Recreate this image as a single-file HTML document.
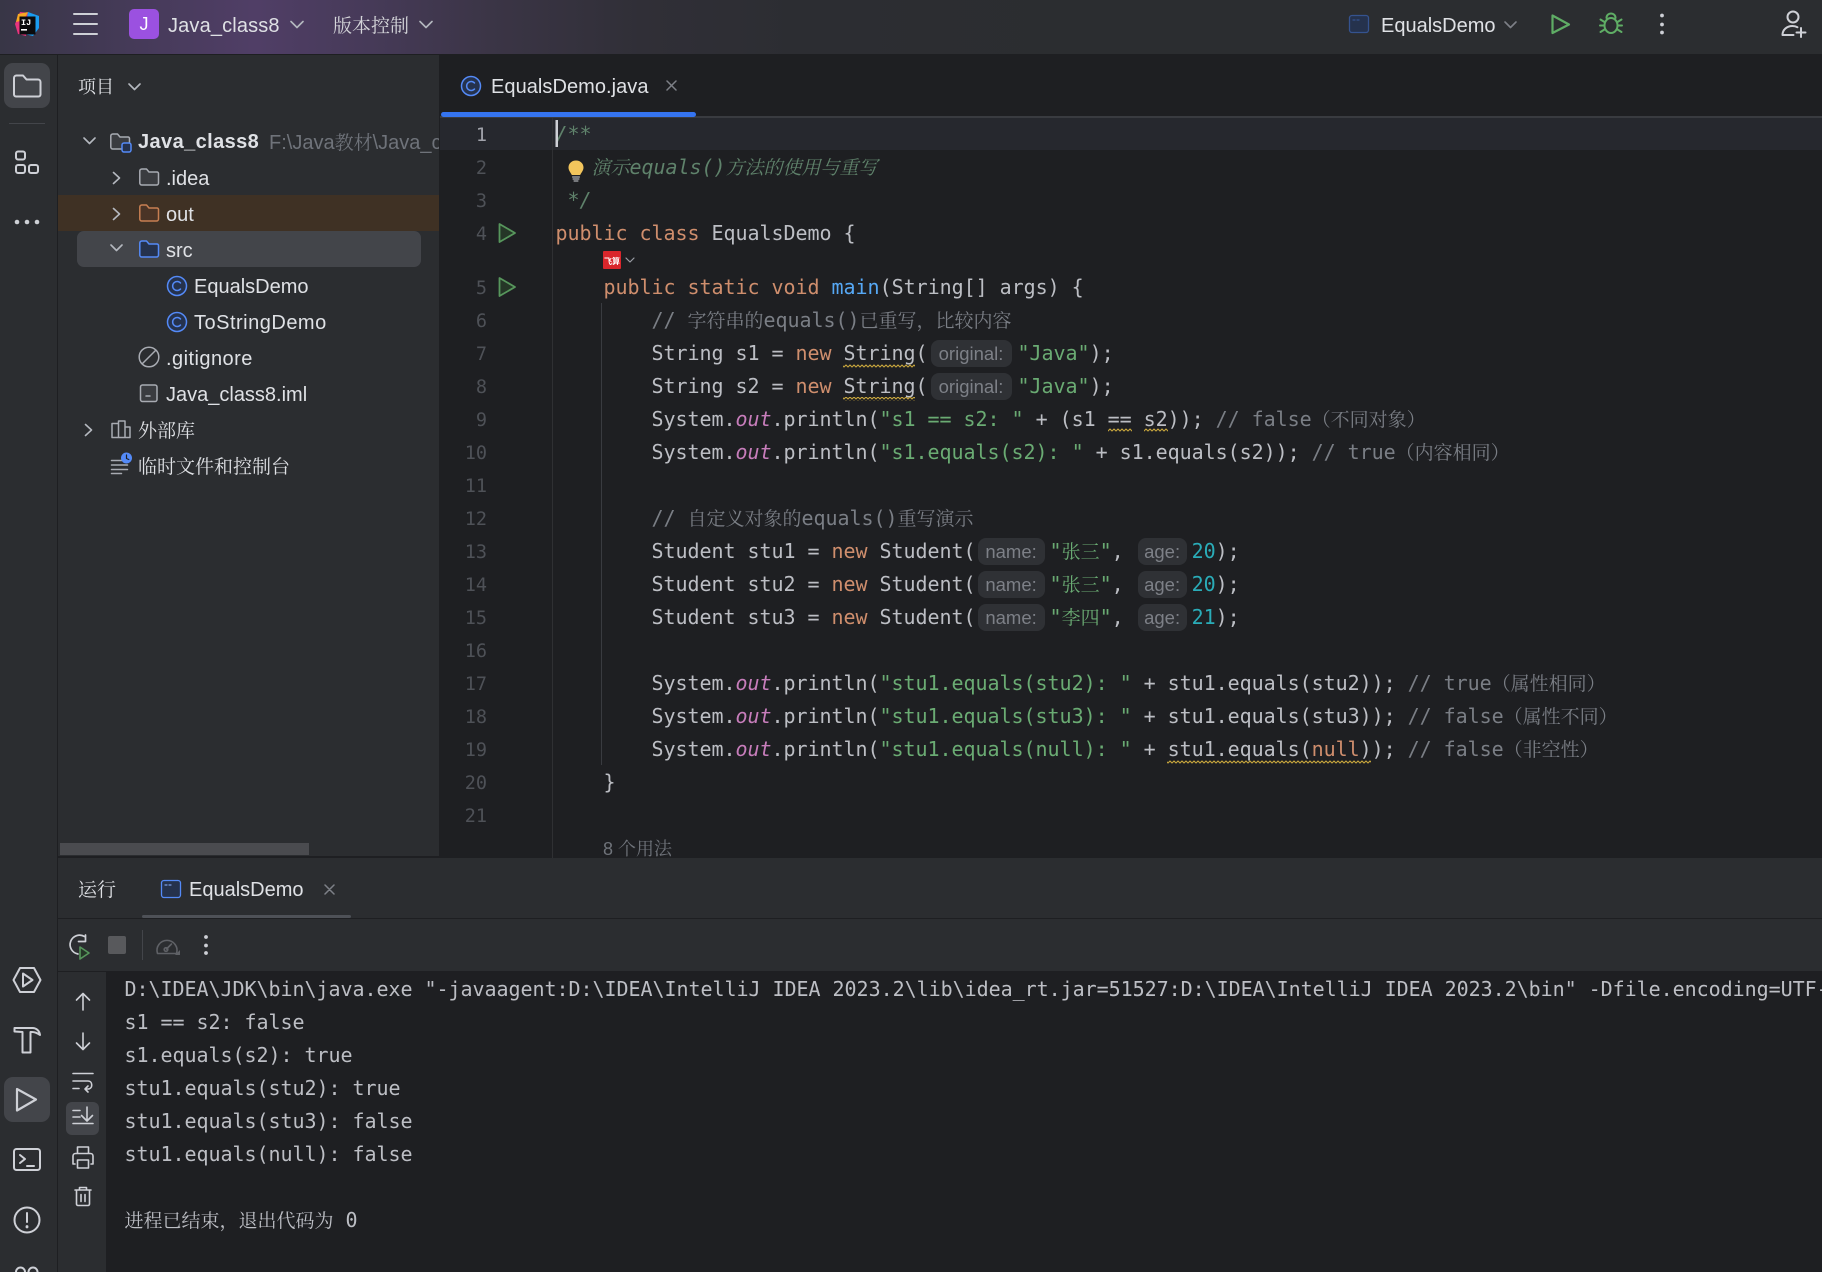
<!DOCTYPE html>
<html lang="zh"><head><meta charset="utf-8"><title>EqualsDemo.java</title>
<style>
html,body{margin:0;padding:0;background:#1e1f22}
#r{position:relative;width:1822px;height:1272px;overflow:hidden;background:#1e1f22;font-family:"Liberation Sans","Noto Serif CJK SC",sans-serif;color:#dfe1e5}
#r>div{position:absolute}
.u{font-size:20px;line-height:36px;height:36px;white-space:pre}
.z{font-family:"Noto Serif CJK SC","Liberation Serif",serif;letter-spacing:0;font-style:normal}
.cd{font-family:"DejaVu Sans Mono","Liberation Mono",monospace;font-size:20px;letter-spacing:-.04px;line-height:33px;height:33px;white-space:pre;color:#bcbec4}
.cd .z{font-size:19px}
.k{color:#cf8e6d}.s{color:#6aab73}.c{color:#7a7e85}.d{color:#5f826b;font-style:italic}.m{color:#56a8f5}.n{color:#2aacb8}.o{color:#c77dbb;font-style:italic}
.h{display:inline-block;height:27px;line-height:27px;background:#2f3135;border-radius:8px;color:#7d8087;font:18.5px/27px "Liberation Sans",sans-serif;letter-spacing:0;text-align:center}
.ln{font-family:"DejaVu Sans Mono",monospace;font-size:18.5px;line-height:33px;height:33px;left:440px;width:47px;text-align:right;color:#4e5157}
</style></head><body>
<div id="r">
<div style="left:0;top:0;width:1822px;height:54px;background:linear-gradient(90deg,#383646 0,#453a58 130px,#503e66 255px,#463a58 370px,#3b3546 490px,#302f37 640px,#2c2d32 800px,#2b2d30 1100px)"></div>
<div style="left:0;top:54px;width:1822px;height:1px;background:#1e1f22"></div>
<div style="left:0;top:55px;width:57px;height:1217px;background:#2b2d30"></div>
<div style="left:57px;top:55px;width:1px;height:1217px;background:#1e1f22"></div>
<div style="left:58px;top:55px;width:381px;height:801px;background:#2b2d30"></div>
<div style="left:58px;top:195px;width:381px;height:36px;background:#3f3124"></div>
<div style="left:77px;top:231px;width:344px;height:36px;border-radius:7px;background:#43454a"></div>
<div style="left:60px;top:843px;width:249px;height:12px;background:#4a4b4f"></div>
<div style="left:440px;top:116px;width:1382px;height:2px;background:#393b40"></div>
<div style="left:441px;top:112px;width:255px;height:5px;border-radius:3px;background:#3574f0"></div>
<div style="left:440px;top:118px;width:1382px;height:32px;background:#26282e"></div>
<div style="left:552px;top:118px;width:1px;height:740px;background:#2f3033"></div>
<div style="left:601px;top:303px;width:1px;height:462px;background:#393b40"></div>
<div style="left:58px;top:858px;width:1764px;height:113px;background:#2b2d30"></div>
<div style="left:58px;top:918px;width:1764px;height:1px;background:#1e1f22"></div>
<div style="left:142px;top:915px;width:209px;height:3px;border-radius:2px;background:#4e5157"></div>
<div style="left:58px;top:971px;width:1764px;height:1px;background:#1e1f22"></div>
<div style="left:58px;top:972px;width:48px;height:300px;background:#2b2d30"></div>
<div style="left:4px;top:63px;width:46px;height:45px;border-radius:9px;background:#43454a"></div>
<div style="left:4px;top:1077px;width:46px;height:45px;border-radius:9px;background:#43454a"></div>
<div style="left:66px;top:1102px;width:33px;height:33px;border-radius:6px;background:#43454a"></div>
<div style="left:9px;top:123px;width:36px;height:1px;background:#43454a"></div>
<div style="left:142px;top:930px;width:1px;height:30px;background:#43454a"></div>

<!-- top bar text -->
<div style="left:129px;top:9px;width:30px;height:30px;border-radius:5px;background:#9b51e0;color:#fff;font-size:18px;line-height:30px;text-align:center">J</div>
<div class="u" style="left:168px;top:8px;letter-spacing:.15px">Java_class8</div>
<div class="u" style="left:333px;top:7px;font-size:19px;color:#d5d6da"><span class="z">版本控制</span></div>
<div class="u" style="left:1381px;top:8px">EqualsDemo</div>

<!-- tree -->
<div class="u" style="left:78px;top:68px;font-size:18px"><span class="z">项目</span></div>
<div class="u" style="left:138px;top:124px;font-weight:bold;letter-spacing:.4px">Java_class8</div>
<div class="u" style="left:269px;top:124px;width:170px;overflow:hidden;color:#6f737a">F:\Java<span class="z" style="font-size:19px">教材</span>\Java_class8</div>
<div class="u" style="left:166px;top:161px">.idea</div>
<div class="u" style="left:166px;top:197px">out</div>
<div class="u" style="left:166px;top:233px">src</div>
<div class="u" style="left:194px;top:269px">EqualsDemo</div>
<div class="u" style="left:194px;top:305px;letter-spacing:.5px">ToStringDemo</div>
<div class="u" style="left:166px;top:341px;letter-spacing:.45px">.gitignore</div>
<div class="u" style="left:166px;top:377px">Java_class8.iml</div>
<div class="u" style="left:138px;top:412px;font-size:19px"><span class="z">外部库</span></div>
<div class="u" style="left:138px;top:448px;font-size:19px"><span class="z">临时文件和控制台</span></div>

<!-- editor tab -->
<div class="u" style="left:491px;top:69px;letter-spacing:.05px">EqualsDemo.java</div>

<!-- line numbers -->
<div class="ln" style="top:119px;color:#a1a3ab">1</div>
<div class="ln" style="top:152px">2</div>
<div class="ln" style="top:185px">3</div>
<div class="ln" style="top:218px">4</div>
<div class="ln" style="top:272px">5</div>
<div class="ln" style="top:305px">6</div>
<div class="ln" style="top:338px">7</div>
<div class="ln" style="top:371px">8</div>
<div class="ln" style="top:404px">9</div>
<div class="ln" style="top:437px">10</div>
<div class="ln" style="top:470px">11</div>
<div class="ln" style="top:503px">12</div>
<div class="ln" style="top:536px">13</div>
<div class="ln" style="top:569px">14</div>
<div class="ln" style="top:602px">15</div>
<div class="ln" style="top:635px">16</div>
<div class="ln" style="top:668px">17</div>
<div class="ln" style="top:701px">18</div>
<div class="ln" style="top:734px">19</div>
<div class="ln" style="top:767px">20</div>
<div class="ln" style="top:800px">21</div>

<!-- code -->
<div class="cd" style="left:555.5px;top:118px"><span class="d">/**</span></div>
<div class="cd" style="left:591.5px;top:150px"><span class="d"><span class="z" style="font-style:italic">演示</span>equals()<span class="z" style="font-style:italic">方法的使用与重写</span></span></div>
<div class="cd" style="left:567.5px;top:184px"><span class="d">*/</span></div>
<div class="cd" style="left:555.5px;top:217px"><span class="k">public class</span> EqualsDemo {</div>
<div class="cd" style="left:603.5px;top:271px"><span class="k">public static void</span> <span class="m">main</span>(String[] args) {</div>
<div class="cd" style="left:651.5px;top:303px"><span class="c">// <span class="z">字符串的</span>equals()<span class="z">已重写，比较内容</span></span></div>
<div class="cd" style="left:651.5px;top:337px">String s1 = <span class="k">new</span> String(<span class="h" style="width:81px;margin:0 6px 0 3px">original:</span><span class="s">"Java"</span>);</div>
<div class="cd" style="left:651.5px;top:370px">String s2 = <span class="k">new</span> String(<span class="h" style="width:81px;margin:0 6px 0 3px">original:</span><span class="s">"Java"</span>);</div>
<div class="cd" style="left:651.5px;top:402px">System.<span class="o">out</span>.println(<span class="s">"s1 == s2: "</span> + (s1 == s2)); <span class="c">// false<span class="z">（不同对象）</span></span></div>
<div class="cd" style="left:651.5px;top:435px">System.<span class="o">out</span>.println(<span class="s">"s1.equals(s2): "</span> + s1.equals(s2)); <span class="c">// true<span class="z">（内容相同）</span></span></div>
<div class="cd" style="left:651.5px;top:501px"><span class="c">// <span class="z">自定义对象的</span>equals()<span class="z">重写演示</span></span></div>
<div class="cd" style="left:651.5px;top:534px">Student stu1 = <span class="k">new</span> Student(<span class="h" style="width:67px;margin:0 5px 0 2px">name:</span><span class="s">"<span class="z">张三</span>"</span>,<span class="h" style="width:49px;margin:0 5px 0 14px">age:</span><span class="n">20</span>);</div>
<div class="cd" style="left:651.5px;top:567px">Student stu2 = <span class="k">new</span> Student(<span class="h" style="width:67px;margin:0 5px 0 2px">name:</span><span class="s">"<span class="z">张三</span>"</span>,<span class="h" style="width:49px;margin:0 5px 0 14px">age:</span><span class="n">20</span>);</div>
<div class="cd" style="left:651.5px;top:600px">Student stu3 = <span class="k">new</span> Student(<span class="h" style="width:67px;margin:0 5px 0 2px">name:</span><span class="s">"<span class="z">李四</span>"</span>,<span class="h" style="width:49px;margin:0 5px 0 14px">age:</span><span class="n">21</span>);</div>
<div class="cd" style="left:651.5px;top:666px">System.<span class="o">out</span>.println(<span class="s">"stu1.equals(stu2): "</span> + stu1.equals(stu2)); <span class="c">// true<span class="z">（属性相同）</span></span></div>
<div class="cd" style="left:651.5px;top:699px">System.<span class="o">out</span>.println(<span class="s">"stu1.equals(stu3): "</span> + stu1.equals(stu3)); <span class="c">// false<span class="z">（属性不同）</span></span></div>
<div class="cd" style="left:651.5px;top:732px">System.<span class="o">out</span>.println(<span class="s">"stu1.equals(null): "</span> + stu1.equals(<span class="k">null</span>)); <span class="c">// false<span class="z">（非空性）</span></span></div>
<div class="cd" style="left:603.5px;top:766px">}</div>
<div style="left:440px;top:832px;width:1382px;height:26px;overflow:hidden"><div style="position:absolute;left:163px;top:3px;font-size:18px;line-height:26px;color:#6f737a;white-space:pre">8 <span class="z">个用法</span></div></div>

<!-- run panel text -->
<div class="u" style="left:78px;top:871px;font-size:19px"><span class="z">运行</span></div>
<div class="u" style="left:189px;top:872px">EqualsDemo</div>

<!-- console -->
<div style="left:124.5px;top:973px;width:1697px;height:299px;overflow:hidden">
<div class="cd" style="position:absolute;left:0;top:0">D:\IDEA\JDK\bin\java.exe "-javaagent:D:\IDEA\IntelliJ IDEA 2023.2\lib\idea_rt.jar=51527:D:\IDEA\IntelliJ IDEA 2023.2\bin" -Dfile.encoding=UTF-8 -Dsun.stdout.encoding=UTF-8</div>
<div class="cd" style="position:absolute;left:0;top:33px">s1 == s2: false</div>
<div class="cd" style="position:absolute;left:0;top:66px">s1.equals(s2): true</div>
<div class="cd" style="position:absolute;left:0;top:99px">stu1.equals(stu2): true</div>
<div class="cd" style="position:absolute;left:0;top:132px">stu1.equals(stu3): false</div>
<div class="cd" style="position:absolute;left:0;top:165px">stu1.equals(null): false</div>
<div class="cd" style="position:absolute;left:0;top:230px"><span class="z">进程已结束，退出代码为</span> 0</div>
</div>

<!-- icons overlay -->
<svg width="1822" height="1272" viewBox="0 0 1822 1272" style="position:absolute;left:0;top:0" fill="none" stroke-linecap="round" stroke-linejoin="round">
<defs><pattern id="w" width="4" height="4" patternUnits="userSpaceOnUse"><path d="M0 3 L2 1 L4 3" stroke="#c9a73d" stroke-width="1.100" fill="none"/></pattern></defs>
<!-- logo -->
<path d="M15 24 L20 12 L30 13 L26 36 L18 34z" fill="#e8347e" stroke="none"/>
<path d="M18 14 L28 12 L24 20 L16 22z" fill="#f7a823" stroke="none"/>
<path d="M28 12 L39 16 L39 28 L33 36 L24 34z" fill="#1a9cf0" stroke="none"/>
<rect x="19.500" y="16.500" width="16" height="18" fill="#0b0b0d" stroke="none"/>
<text x="21" y="25" font-family="Liberation Mono,monospace" font-weight="bold" font-size="8.500" fill="#fff">IJ</text>
<rect x="21" y="29" width="6" height="1.600" fill="#fff" stroke="none"/>
<!-- hamburger -->
<path d="M74 14H97M74 24H97M74 34H97" stroke="#ced0d6" stroke-width="2"/>
<!-- chevrons -->
<g stroke="#b4b8bf" stroke-width="1.600">
<path d="M291 21.500l6 6 6-6M420 21.500l6 6 6-6"/>
<path d="M129 84l5.500 5.500 5.500-5.500M84 138l5.500 5.500 5.500-5.500M111 245l5.500 5.500 5.500-5.500M113.500 172.500l6 5.500-6 5.500M113.500 208.500l6 5.500-6 5.500M85.500 424.500l6 5.500-6 5.500"/>
<path d="M1505 22l5.500 5.500 5.500-5.500" stroke="#7d8087"/>
</g>
<!-- top right -->
<rect x="1349.500" y="15.500" width="19" height="17" rx="2.500" fill="#25324d" stroke="#35538f" stroke-width="1.300"/>
<path d="M1353 20h2M1357 20h2" stroke="#35538f" stroke-width="1.200"/>
<path d="M1552.500 15.500L1569 24.500 1552.500 33z" stroke="#5fad65" stroke-width="2.200"/>
<g stroke="#5fad65" stroke-width="2">
<ellipse cx="1611" cy="25.500" rx="6.500" ry="7.500"/>
<path d="M1606.500 18c0-6 9-6 9 0M1600.500 19.500l4 2.500M1621.500 19.500l-4 2.500M1600 25.500h4.500M1622 25.500h-4.500M1600.500 32l4-2.500M1621.500 32l-4-2.500"/>
</g>
<g fill="#ced0d6" stroke="none"><circle cx="1662" cy="15.500" r="1.900"/><circle cx="1662" cy="24.500" r="1.900"/><circle cx="1662" cy="32.500" r="1.900"/></g>
<g stroke="#ced0d6" stroke-width="2">
<circle cx="1793" cy="17" r="5.500"/>
<path d="M1782.500 35c0-5 4-9 10-9 2 0 3.500.4 5 1.200M1782.500 35h11M1801 28v9M1796.500 32.500h9"/>
</g>
<!-- left stripe -->
<g stroke="#ced0d6" stroke-width="2">
<path d="M14 78a2.500 2.500 0 0 1 2.500-2.500h6.500l3.500 4h11.500a2.500 2.500 0 0 1 2.500 2.500v12.500a2 2 0 0 1-2 2H16a2 2 0 0 1-2-2z"/>
<rect x="16" y="151.500" width="9" height="8" rx="2"/>
<rect x="16" y="165" width="9" height="8" rx="2"/>
<rect x="29" y="165" width="9" height="8" rx="2"/>
</g>
<g fill="#ced0d6" stroke="none"><circle cx="17" cy="222" r="2.300"/><circle cx="27" cy="222" r="2.300"/><circle cx="37" cy="222" r="2.300"/></g>
<g stroke="#ced0d6" stroke-width="2">
<path d="M20 968h14l6.500 12-6.500 12H20l-6.500-12z"/>
<path d="M23 973.500l9.500 6.500-9.500 6.500z"/>
<path d="M14.500 1028h18c4 0 7 3 7.500 7-2-1.500-4.500-3-8-3h-1.500v20.500h-8v-20.500l-8-.5z"/>
<path d="M17 1089l19 10.500-19 11z" stroke-width="2.200"/>
<rect x="14" y="1149" width="26" height="21" rx="2.500"/>
<path d="M20 1155l5 4-5 4M27 1166h7"/>
<circle cx="27" cy="1220" r="12.500"/>
<path d="M27 1213v9"/>
<path d="M27 1226.500v.5" stroke-width="2.800"/>
<circle cx="20.500" cy="1272" r="4.500"/><circle cx="33" cy="1272" r="4.500"/>
</g>
<!-- folders tree -->
<g transform="translate(110,133)" stroke="#a8abb2" stroke-width="1.500"><path d="M.8 3a2 2 0 0 1 2-2h4.700l2.500 3h8a1.500 1.500 0 0 1 1.500 1.500V16H2.800a2 2 0 0 1-2-2z" fill="#3a3c40"/></g>
<rect x="122" y="143" width="9" height="9" rx="2" fill="#25324d" stroke="#548af7" stroke-width="1.500"/>
<g transform="translate(139,168)" stroke="#a8abb2" stroke-width="1.500"><path d="M.8 3a2 2 0 0 1 2-2h4.700l2.500 3h8a1.500 1.500 0 0 1 1.500 1.500V15a2 2 0 0 1-2 2H2.800a2 2 0 0 1-2-2z" fill="#3a3c40"/></g>
<g transform="translate(139,204)" stroke="#c77f52" stroke-width="1.500"><path d="M.8 3a2 2 0 0 1 2-2h4.700l2.500 3h8a1.500 1.500 0 0 1 1.500 1.500V15a2 2 0 0 1-2 2H2.800a2 2 0 0 1-2-2z" fill="#4a3426"/></g>
<g transform="translate(139,240)" stroke="#548af7" stroke-width="1.500"><path d="M.8 3a2 2 0 0 1 2-2h4.700l2.500 3h8a1.500 1.500 0 0 1 1.500 1.500V15a2 2 0 0 1-2 2H2.800a2 2 0 0 1-2-2z" fill="#25324d"/></g>
<g stroke="#548af7" stroke-width="1.500">
<circle cx="177" cy="286" r="9.500" fill="#25324d"/><path d="M180.500 283a4.500 4.500 0 1 0 0 6"/>
<circle cx="177" cy="322" r="9.500" fill="#25324d"/><path d="M180.500 319a4.500 4.500 0 1 0 0 6"/>
<circle cx="471" cy="86" r="9.500" fill="#25324d"/><path d="M474.500 83a4.500 4.500 0 1 0 0 6"/>
</g>
<g stroke="#a8abb2" stroke-width="1.500">
<circle cx="149" cy="357" r="9.800"/><path d="M142.500 363.500l13-13"/>
<rect x="140.500" y="385" width="16.500" height="16.500" rx="2" fill="#3a3c40"/>
<path d="M146 396h4"/>
<path d="M112 437.500v-14h6.500v14M118.500 437.500V421h6.500v16.500M125 437.500v-10.500h5v10.500M112 437.500h18"/>
<path d="M111.500 460.500h10M111.500 465h16M111.500 469.500h16M111.500 473.500h10"/>
</g>
<circle cx="126.500" cy="458" r="5.500" fill="#548af7"/>
<path d="M126.500 455v3.500l2.300 1" stroke="#1e1f22" stroke-width="1.200"/>
<!-- tab closes -->
<path d="M667 81l9 9M676 81l-9 9M325 885l9 9M334 885l-9 9" stroke="#7d8087" stroke-width="1.500"/>
<!-- bulb -->
<path d="M576 160.500c-4.500 0-7.500 3.200-7.500 7 0 3 2 4.800 3.300 7.500h8.400c1.300-2.700 3.300-4.500 3.300-7.500 0-3.800-3-7-7.500-7z" fill="#f2c55c" stroke="none"/>
<path d="M572.500 177h7M573 179h6M574 181h4" stroke="#ced0d6" stroke-width="1"/>
<!-- cursor -->
<rect x="555.500" y="120" width="2.500" height="27" fill="#ced0d6" stroke="none"/>
<!-- gutter run -->
<path d="M499.500 224l15.500 9-15.500 9z" fill="#253627" stroke="#57965c" stroke-width="1.800"/>
<path d="M499.500 278l15.500 9-15.500 9z" fill="#253627" stroke="#57965c" stroke-width="1.800"/>
<!-- feisuan -->
<rect x="603" y="251" width="18" height="18" rx="1" fill="#d9262c" stroke="none"/>
<text x="604" y="264" font-family="Noto Sans CJK SC,sans-serif" font-weight="bold" font-size="8" fill="#fff">飞算</text>
<path d="M626 258l4 4 4-4" stroke="#9a9da4" stroke-width="1.200"/>
<!-- squiggles -->
<rect x="843" y="364" width="72" height="4" fill="url(#w)" stroke="none"/>
<rect x="843" y="397" width="72" height="4" fill="url(#w)" stroke="none"/>
<rect x="1108" y="428" width="24" height="4" fill="url(#w)" stroke="none"/>
<rect x="1144" y="428" width="24" height="4" fill="url(#w)" stroke="none"/>
<rect x="1167" y="760" width="204" height="4" fill="url(#w)" stroke="none"/>
<!-- run tab icon -->
<rect x="161.500" y="880.500" width="19" height="17" rx="2.500" fill="#25324d" stroke="#548af7" stroke-width="1.300"/>
<path d="M165 885h2M169 885h2" stroke="#7a9ee8" stroke-width="1.200"/>
<!-- run toolbar -->
<g stroke="#ced0d6" stroke-width="1.700">
<path d="M84.500 936.500a9.500 9.500 0 1 0-6.500 17.500M85.500 935v6.500h-7"/>
</g>
<path d="M80 947l9 6-9 6z" fill="#253627" stroke="#57965c" stroke-width="1.600"/>
<rect x="108" y="936" width="18" height="18" rx="2" fill="#58595c" stroke="none"/>
<g stroke="#5f6166" stroke-width="1.600">
<path d="M157.500 953.500a10 10 0 1 1 19 0zM166.500 949l5-5"/>
<circle cx="166" cy="949.500" r="1.800"/>
</g>
<path d="M180 955v-5l-5 5z" fill="#5f6166" stroke="none"/>
<g fill="#ced0d6" stroke="none"><circle cx="206" cy="937" r="1.900"/><circle cx="206" cy="945.500" r="1.900"/><circle cx="206" cy="953" r="1.900"/></g>
<!-- console left toolbar -->
<g stroke="#ced0d6" stroke-width="1.600">
<path d="M83 1010v-16M76.500 1000l6.500-6.500 6.500 6.500"/>
<path d="M83 1033v16M76.500 1043l6.500 6.500 6.500-6.500"/>
<path d="M73 1073.500h20M73 1081h15c5 0 5 8 0 8h-3M88 1086l-3 3 3 3M73 1088.500h6"/>
<path d="M73 1110.500h7M73 1117h7M73 1123.500h20M87 1107v14M81.500 1115.500l5.500 5.500 5.500-5.500"/>
<path d="M77.500 1153v-6h11v6M75 1164h-2v-8a2.500 2.500 0 0 1 2.500-2.500h15a2.500 2.500 0 0 1 2.500 2.500v8h-2M77.500 1160h11v8h-11z"/>
<path d="M75 1190h16M79.500 1190v-2.500h7v2.500M76.500 1190v14a1.500 1.500 0 0 0 1.500 1.500h10a1.500 1.500 0 0 0 1.500-1.500v-14M81 1194.500v7M85 1194.500v7"/>
</g>
</svg>
</div>
</body></html>
